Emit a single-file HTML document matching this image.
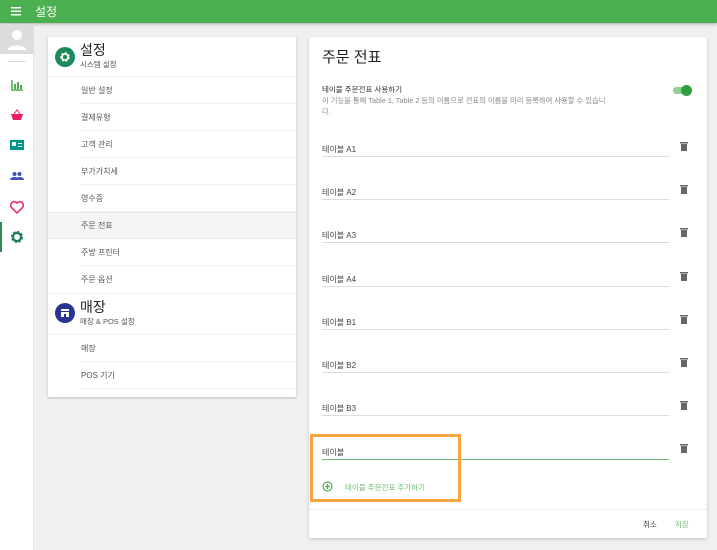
<!DOCTYPE html><html><head><meta charset="utf-8"><style>
*{margin:0;padding:0;box-sizing:border-box}
body{width:717px;height:550px;background:#f0f0f0;font-family:"Liberation Sans","Noto Sans CJK KR",sans-serif;position:relative;overflow:hidden;color:#333}
.hd{position:absolute;left:0;top:0;width:717px;height:23px;background:#4caf50;box-shadow:0 1px 3px rgba(0,0,0,.3)}
.hd .t{position:absolute;left:35px;top:3px;color:#fff;font-size:12px}
.side{position:absolute;left:0;top:24px;width:34px;height:526px;background:#fff;border-right:1px solid #e4e4e4}
.av{position:absolute;left:0;top:0;width:34px;height:30px;background:#ddd}
.ic{position:absolute;left:9px;width:16px;height:16px}
.card{position:absolute;background:#fff;box-shadow:0 1px 3px rgba(0,0,0,.2)}
.it{position:absolute;left:32px;right:0;height:27px;border-bottom:1px solid #eee;font-size:8px;color:#555;line-height:27px;padding-left:1px}
.circ{position:absolute;left:7px;width:20px;height:20px;border-radius:50%}
.h1{position:absolute;left:32px;font-size:14px;color:#222}
.h2{position:absolute;left:32px;font-size:7.5px;color:#555}
.row{position:absolute;left:13px;width:347px;border-bottom:1px solid #ddd;font-size:8px;color:#444;height:14px;padding-top:1px}
.tr{position:absolute;left:371px;width:8px;height:10px}
</style></head><body>
<div class="hd"><svg style="position:absolute;left:11px;top:7px" width="10" height="9"><rect y="0" width="10" height="1.5" fill="#fff"/><rect y="3.5" width="10" height="1.5" fill="#fff"/><rect y="7" width="10" height="1.5" fill="#fff"/></svg><div class="t">설정</div></div>
<div class="side"><div class="av"><svg width="34" height="30"><circle cx="17" cy="11" r="5" fill="#fff"/><path d="M8 26c0-6 18-6 18 0z" fill="#fff"/></svg></div>
<div style="position:absolute;left:8px;top:37px;width:18px;height:1px;background:#ddd"></div>
<svg class="ic" style="top:53px" viewBox="0 0 16 16"><path d="M3 3v10h11" stroke="#4caf50" stroke-width="1.5" fill="none"/><rect x="5" y="7" width="2" height="5" fill="#4caf50"/><rect x="8" y="5" width="2" height="7" fill="#4caf50"/><rect x="11" y="8" width="2" height="4" fill="#4caf50"/></svg>
<svg class="ic" style="top:83px" viewBox="0 0 16 16"><path d="M2 7h12l-2 6H4z" fill="#e91e63"/><path d="M5 7l3-4 3 4" stroke="#e91e63" fill="none"/></svg>
<svg class="ic" style="top:113px" viewBox="0 0 16 16"><rect x="1" y="3" width="14" height="10" fill="#009688"/><rect x="3" y="5" width="4" height="4" fill="#fff"/><rect x="9" y="6" width="4" height="1" fill="#fff"/><rect x="9" y="9" width="4" height="1" fill="#fff"/></svg>
<svg class="ic" style="top:144px" viewBox="0 0 16 16"><circle cx="5.5" cy="6" r="2" fill="#3f51b5"/><circle cx="10.5" cy="6" r="2" fill="#3f51b5"/><path d="M1 12c0-4 9-4 9 0zM7 12c0-4 8-4 8 0z" fill="#3f51b5"/></svg>
<svg class="ic" style="top:175px" viewBox="0 0 16 16"><path d="M8 14L2.5 8.5A3 3 0 0 1 8 4a3 3 0 0 1 5.5 4.5z" fill="none" stroke="#e91e63" stroke-width="1.5"/></svg>
<div style="position:absolute;left:0;top:198px;width:2px;height:30px;background:#2e8b57"></div>
<svg class="ic" style="top:205px" viewBox="0 0 16 16"><circle cx="8" cy="8" r="4.5" fill="none" stroke="#1b7a56" stroke-width="3" stroke-dasharray="2.2 1.3"/><circle cx="8" cy="8" r="4" fill="none" stroke="#1b7a56" stroke-width="2"/></svg>
</div>
<div class="card" style="left:48px;top:37px;width:248px;height:360px">
<div class="circ" style="top:10px;background:#1b8a5a"></div><svg style="position:absolute;left:11px;top:14px" width="12" height="12" viewBox="0 0 12 12"><circle cx="6" cy="6" r="3.5" fill="none" stroke="#fff" stroke-width="2.5" stroke-dasharray="2 1.2"/><circle cx="6" cy="6" r="3" fill="none" stroke="#fff" stroke-width="1.5"/></svg>
<div class="h1" style="top:3px">설정</div><div class="h2" style="top:22px">시스템 설정</div>
<div style="position:absolute;left:0;right:0;top:39px;height:1px;background:#eee"></div>
<div class="it" style="top:40px">일반 설정</div>
<div class="it" style="top:67px">결제유형</div>
<div class="it" style="top:94px">고객 관리</div>
<div class="it" style="top:121px">부가가치세</div>
<div class="it" style="top:148px">영수증</div>
<div style="position:absolute;left:0;right:0;top:175px;height:27px;background:#f5f5f5;border-top:1px solid #e8e8e8;border-bottom:1px solid #e8e8e8"></div>
<div class="it" style="top:175px;border:none">주문 전표</div>
<div class="it" style="top:202px">주방 프린터</div>
<div class="it" style="top:229px;border:none">주문 옵션</div>
<div style="position:absolute;left:0;right:0;top:256px;height:1px;background:#eee"></div>
<div class="circ" style="top:266px;background:#283593"></div><svg style="position:absolute;left:11px;top:270px" width="12" height="12"><rect x="2" y="2" width="8" height="2" fill="#fff"/><rect x="2" y="5" width="8" height="5" fill="#fff"/><rect x="5" y="7" width="2" height="3" fill="#283593"/></svg>
<div class="h1" style="top:260px">매장</div><div class="h2" style="top:279px">매장 & POS 설정</div>
<div style="position:absolute;left:0;right:0;top:297px;height:1px;background:#eee"></div>
<div class="it" style="top:298px">매장</div>
<div class="it" style="top:325px">POS 기기</div>
</div>
<div class="card" style="left:309px;top:37px;width:398px;height:501px">
<div style="position:absolute;left:13px;top:9px;font-size:15px;color:#222">주문 전표</div>
<div style="position:absolute;left:13px;top:47px;font-size:7.5px;color:#333">테이블 주문전표 사용하기</div>
<div style="position:absolute;left:13px;top:58px;width:290px;font-size:7.3px;color:#888;line-height:11px">이 기능을 통해 Table 1, Table 2 등의 이름으로 전표의 이름을 미리 등록하여 사용할 수 있습니다.</div>
<div style="position:absolute;left:364px;top:50px;width:16px;height:7px;border-radius:4px;background:#8fcf92"></div>
<div style="position:absolute;left:372px;top:48px;width:11px;height:11px;border-radius:50%;background:#2e9e3e"></div>
<div class="row" style="top:106px">테이블 A1</div>
<div class="row" style="top:149px">테이블 A2</div>
<div class="row" style="top:192px">테이블 A3</div>
<div class="row" style="top:236px">테이블 A4</div>
<div class="row" style="top:279px">테이블 B1</div>
<div class="row" style="top:322px">테이블 B2</div>
<div class="row" style="top:365px">테이블 B3</div>
<div class="row" style="top:409px;border-bottom:1.5px solid #6cc06f">테이블</div>
<svg class="tr" style="top:104px"><rect x="0" y="1" width="8" height="1.5" fill="#666"/><rect x="1" y="3" width="6" height="7" fill="#666"/></svg>
<svg class="tr" style="top:147px"><rect x="0" y="1" width="8" height="1.5" fill="#666"/><rect x="1" y="3" width="6" height="7" fill="#666"/></svg>
<svg class="tr" style="top:190px"><rect x="0" y="1" width="8" height="1.5" fill="#666"/><rect x="1" y="3" width="6" height="7" fill="#666"/></svg>
<svg class="tr" style="top:234px"><rect x="0" y="1" width="8" height="1.5" fill="#666"/><rect x="1" y="3" width="6" height="7" fill="#666"/></svg>
<svg class="tr" style="top:277px"><rect x="0" y="1" width="8" height="1.5" fill="#666"/><rect x="1" y="3" width="6" height="7" fill="#666"/></svg>
<svg class="tr" style="top:320px"><rect x="0" y="1" width="8" height="1.5" fill="#666"/><rect x="1" y="3" width="6" height="7" fill="#666"/></svg>
<svg class="tr" style="top:363px"><rect x="0" y="1" width="8" height="1.5" fill="#666"/><rect x="1" y="3" width="6" height="7" fill="#666"/></svg>
<svg class="tr" style="top:406px"><rect x="0" y="1" width="8" height="1.5" fill="#666"/><rect x="1" y="3" width="6" height="7" fill="#666"/></svg>
<div style="position:absolute;left:1px;top:397px;width:151px;height:68px;border:3px solid #f7a440"></div>
<svg style="position:absolute;left:13px;top:444px" width="11" height="11"><circle cx="5.5" cy="5.5" r="4.5" fill="none" stroke="#4caf50" stroke-width="1.2"/><path d="M5.5 3v5M3 5.5h5" stroke="#4caf50" stroke-width="1.2"/></svg>
<div style="position:absolute;left:36px;top:445px;font-size:7.5px;color:#6cbf6f">테이블 주문전표 추가하기</div>
<div style="position:absolute;left:0;right:0;top:472px;height:1px;background:#eee"></div>
<div style="position:absolute;left:334px;top:482px;font-size:7.5px;color:#444">취소</div>
<div style="position:absolute;left:366px;top:482px;font-size:7.5px;color:#6cbf6f">저장</div>
</div>
</body></html>
